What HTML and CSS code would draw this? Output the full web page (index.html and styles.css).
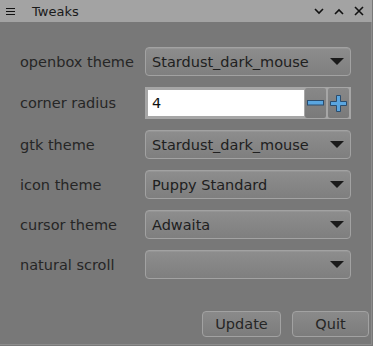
FILE: index.html
```html
<!DOCTYPE html>
<html>
<head>
<meta charset="utf-8">
<link rel="stylesheet" href="styles.css">
</head>
<body>
<div class="window">
  <div class="titlebar">
    <svg class="menu-icon" width="10" height="8" viewBox="0 0 10 8"><path d="M0 0.5H9M0 3.5H9M0 6.5H9" stroke="#111" stroke-width="1.2" fill="none"/></svg>
    <span class="title">Tweaks</span>
    <div class="controls">
      <svg width="10" height="7" viewBox="0 0 10 7"><path d="M1 1L5 5L9 1" stroke="#111" stroke-width="1.6" fill="none"/></svg>
      <svg width="10" height="7" viewBox="0 0 10 7"><path d="M1 6L5 2L9 6" stroke="#111" stroke-width="1.6" fill="none"/></svg>
      <svg width="10" height="10" viewBox="0 0 10 10"><path d="M1 1L9 9M9 1L1 9" stroke="#111" stroke-width="1.6" fill="none"/></svg>
    </div>
  </div>
  <div class="content">
    <div class="form">
      <label class="lbl">openbox theme</label>
      <div class="combo"><span>Stardust_dark_mouse</span><i class="arrow"></i></div>

      <label class="lbl">corner radius</label>
      <div class="spin">
        <div class="entry">4</div>
        <div class="spinbtn"><svg width="17" height="6" viewBox="0 0 17 6"><rect x="0.5" y="0.5" width="16" height="4.5" fill="#5aa6e0" stroke="#2b4d6e"/></svg></div>
        <div class="spinbtn"><svg width="17" height="17" viewBox="0 0 17 17"><path d="M6.5 0.5H10.5V6.5H16.5V10.5H10.5V16.5H6.5V10.5H0.5V6.5H6.5Z" fill="#5aa6e0" stroke="#2b4d6e"/></svg></div>
      </div>

      <label class="lbl">gtk theme</label>
      <div class="combo"><span>Stardust_dark_mouse</span><i class="arrow"></i></div>

      <label class="lbl">icon theme</label>
      <div class="combo"><span>Puppy Standard</span><i class="arrow"></i></div>

      <label class="lbl">cursor theme</label>
      <div class="combo"><span>Adwaita</span><i class="arrow"></i></div>

      <label class="lbl">natural scroll</label>
      <div class="combo"><span></span><i class="arrow"></i></div>
    </div>
    <div class="buttons">
      <button class="btn btn-update">Update</button>
      <button class="btn btn-quit">Quit</button>
    </div>
  </div>
</div>
</body>
</html>
```

FILE: styles.css
```css
html, body {
  margin: 0;
  padding: 0;
  background: #787878;
}
body {
  font-family: "DejaVu Sans", sans-serif;
  font-size: 14.5px;
  color: #262626;
}
.window {
  width: 373px;
  height: 346px;
  display: flex;
  flex-direction: column;
  box-sizing: border-box;
  border-right: 1px solid #787878;
  border-bottom: 1px solid #787878;
}
.titlebar {
  height: 22px;
  background: #a3a3a3;
  display: flex;
  align-items: center;
  padding-left: 6px;
  color: #1a1a1a;
  flex-shrink: 0;
}
.menu-icon { margin-top: 2px; }
.title {
  margin-left: 16px;
  font-size: 13px;
  flex: 1;
}
.controls {
  display: flex;
  align-items: center;
  gap: 10px;
  padding-right: 8px;
}
.content {
  flex: 1;
  display: flex;
  flex-direction: column;
  border-right: 1px solid #8c8c8c;
  border-bottom: 1px solid #8c8c8c;
}
.form {
  display: grid;
  grid-template-columns: 125px 206px;
  grid-auto-rows: auto;
  row-gap: 11px;
  padding: 25px 0 0 20px;
  align-items: center;
}
.lbl { color: #262626; }
.combo {
  height: 29px;
  box-sizing: border-box;
  border: 1px solid #a2a2a2;
  border-radius: 4px;
  background: linear-gradient(#8d8d8d, #7f7f7f);
  display: flex;
  align-items: center;
  padding: 0 6px 0 6px;
  box-shadow: inset 0 1px 0 rgba(255,255,255,0.08);
}
.combo span { flex: 1; color: #202020; }
.arrow {
  width: 0; height: 0;
  border-left: 7.5px solid transparent;
  border-right: 7.5px solid transparent;
  border-top: 7px solid #1a1a1a;
  margin-right: 0px;
}
.spin {
  height: 32px;
  box-sizing: border-box;
  display: flex;
  border: 3px solid #a6a6a6;
  border-right-width: 1px;
  background: #a6a6a6;
}
.entry {
  flex: 1;
  background: #fff;
  color: #111;
  display: flex;
  align-items: center;
  padding-left: 4px;
}
.spinbtn {
  width: 23px;
  box-sizing: border-box;
  border: 1px solid #a6a6a6;
  border-radius: 3px;
  background: linear-gradient(#888, #7a7a7a);
  margin-top: -3px;
  margin-bottom: -3px;
  display: flex;
  align-items: center;
  justify-content: center;
}
.buttons {
  margin-top: auto;
  display: flex;
  justify-content: flex-end;
  gap: 11px;
  padding: 0 2px 7px 0;
}
.btn {
  font-family: "DejaVu Sans", sans-serif;
  font-size: 14.5px;
  color: #262626;
  height: 26px;
  border: 1px solid #a2a2a2;
  border-radius: 4px;
  background: linear-gradient(#8a8a8a, #7c7c7c);
  padding: 0;
}
.btn-update { width: 79px; }
.btn-quit { width: 77px; }
```
